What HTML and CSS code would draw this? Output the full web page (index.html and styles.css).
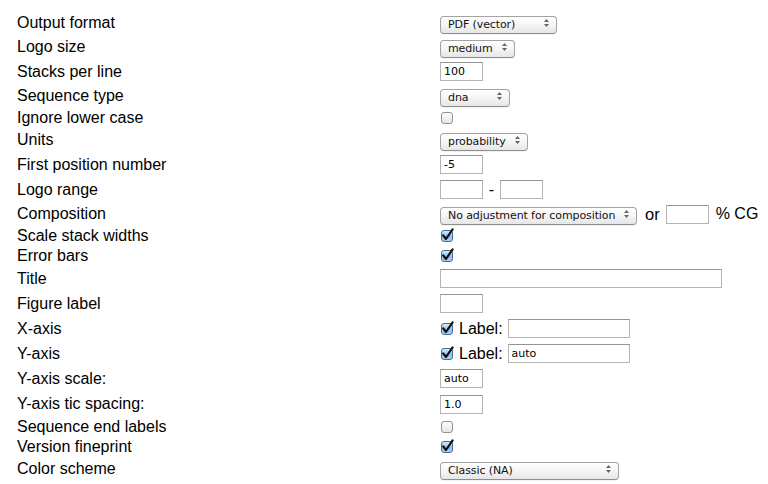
FILE: index.html
```html
<!DOCTYPE html>
<html>
<head>
<meta charset="utf-8">
<title>Logo options</title>
<link rel="stylesheet" href="styles.css">
</head>
<body>
<form class="form">
  <div class="row h-s"><span class="lbl">Output format</span>
    <span class="ctl"><span class="sel w117"><select><option>PDF (vector)</option></select><svg class="arr" viewBox="0 0 5 8"><path d="M0 3h5L2.5 0z M0 5h5L2.5 8z"/></svg></span></span></div>
  <div class="row h-s"><span class="lbl">Logo size</span>
    <span class="ctl"><span class="sel w75"><select><option>medium</option></select><svg class="arr" viewBox="0 0 5 8"><path d="M0 3h5L2.5 0z M0 5h5L2.5 8z"/></svg></span></span></div>
  <div class="row h-i"><span class="lbl">Stacks per line</span>
    <span class="ctl"><input class="txt w43" type="text" value="100"></span></div>
  <div class="row h-s"><span class="lbl">Sequence type</span>
    <span class="ctl"><span class="sel w70"><select><option>dna</option></select><svg class="arr" viewBox="0 0 5 8"><path d="M0 3h5L2.5 0z M0 5h5L2.5 8z"/></svg></span></span></div>
  <div class="row h-c"><span class="lbl">Ignore lower case</span>
    <span class="ctl"><span class="cb"><input type="checkbox"></span></span></div>
  <div class="row h-s"><span class="lbl">Units</span>
    <span class="ctl"><span class="sel w88"><select><option>probability</option></select><svg class="arr" viewBox="0 0 5 8"><path d="M0 3h5L2.5 0z M0 5h5L2.5 8z"/></svg></span></span></div>
  <div class="row h-i"><span class="lbl">First position number</span>
    <span class="ctl"><input class="txt w43" type="text" value="-5"></span></div>
  <div class="row h-i"><span class="lbl">Logo range</span>
    <span class="ctl"><input class="txt w43" type="text" value=""><span class="dash">-</span><input class="txt w43" type="text" value=""></span></div>
  <div class="row h-s"><span class="lbl">Composition</span>
    <span class="ctl"><span class="sel w197"><select><option>No adjustment for composition</option></select><svg class="arr" viewBox="0 0 5 8"><path d="M0 3h5L2.5 0z M0 5h5L2.5 8z"/></svg></span><span class="or">or</span><input class="txt w43" type="text" value=""><span class="pct">% CG</span></span></div>
  <div class="row h-c"><span class="lbl">Scale stack widths</span>
    <span class="ctl"><span class="cb"><input type="checkbox" checked><svg class="chk" viewBox="0 0 14 14"><path d="M3.2 7.4 L6 11 L12.6 1.4" /></svg></span></span></div>
  <div class="row h-c"><span class="lbl">Error bars</span>
    <span class="ctl"><span class="cb"><input type="checkbox" checked><svg class="chk" viewBox="0 0 14 14"><path d="M3.2 7.4 L6 11 L12.6 1.4" /></svg></span></span></div>
  <div class="row h-i"><span class="lbl">Title</span>
    <span class="ctl"><input class="txt w282" type="text" value=""></span></div>
  <div class="row h-i"><span class="lbl">Figure label</span>
    <span class="ctl"><input class="txt w43" type="text" value=""></span></div>
  <div class="row h-i"><span class="lbl">X-axis</span>
    <span class="ctl"><span class="cb"><input type="checkbox" checked><svg class="chk" viewBox="0 0 14 14"><path d="M3.2 7.4 L6 11 L12.6 1.4" /></svg></span><span class="lab">Label:</span><input class="txt w122" type="text" value=""></span></div>
  <div class="row h-i"><span class="lbl">Y-axis</span>
    <span class="ctl"><span class="cb"><input type="checkbox" checked><svg class="chk" viewBox="0 0 14 14"><path d="M3.2 7.4 L6 11 L12.6 1.4" /></svg></span><span class="lab">Label:</span><input class="txt w122" type="text" value="auto"></span></div>
  <div class="row h-i"><span class="lbl">Y-axis scale:</span>
    <span class="ctl"><input class="txt w43" type="text" value="auto"></span></div>
  <div class="row h-i2"><span class="lbl">Y-axis tic spacing:</span>
    <span class="ctl"><input class="txt w43" type="text" value="1.0"></span></div>
  <div class="row h-c"><span class="lbl">Sequence end labels</span>
    <span class="ctl"><span class="cb"><input type="checkbox"></span></span></div>
  <div class="row h-c"><span class="lbl">Version fineprint</span>
    <span class="ctl"><span class="cb"><input type="checkbox" checked><svg class="chk" viewBox="0 0 14 14"><path d="M3.2 7.4 L6 11 L12.6 1.4" /></svg></span></span></div>
  <div class="row h-s"><span class="lbl">Color scheme</span>
    <span class="ctl"><span class="sel w179"><select><option>Classic (NA)</option></select><svg class="arr" viewBox="0 0 5 8"><path d="M0 3h5L2.5 0z M0 5h5L2.5 8z"/></svg></span></span></div>
</form>
</body>
</html>
```
FILE: styles.css
```css
html, body {
  margin: 0;
  padding: 0;
  background: #fff;
}
body {
  font-family: "Liberation Sans", Arial, Helvetica, sans-serif;
  font-size: 16px;
  color: #000;
}
.form {
  margin: 0;
  padding: 11px 0 0 17px;
}
.row {
  display: grid;
  grid-template-columns: 423px auto;
  align-items: center;
}
.h-s { height: 24px; }
.h-i { height: 25px; }
.h-i2 { height: 26px; }
.h-c { height: 20px; }
.lbl {
  line-height: 18px;
  white-space: nowrap;
}
.ctl {
  display: flex;
  align-items: center;
  height: 100%;
}

/* select */
.sel {
  position: relative;
  display: inline-block;
  height: 18px;
}
.sel select {
  -webkit-appearance: none;
  appearance: none;
  box-sizing: border-box;
  width: 100%;
  height: 18px;
  margin: 0;
  padding: 0 0 0 7px;
  border: 1px solid #a3a3a3;
  border-bottom-color: #8f8f8f;
  border-radius: 4px;
  background: linear-gradient(#ffffff, #f5f5f5 50%, #e6e6e6);
  font: 11px "DejaVu Sans", Verdana, sans-serif;
  letter-spacing: -0.1px;
  color: #111;
  box-shadow: 0 1px 0 rgba(0,0,0,0.05);
}
.sel .arr {
  position: absolute;
  right: 8px;
  top: 5px;
  width: 5px;
  height: 8px;
  fill: #666;
  pointer-events: none;
}
.w70 { width: 70px; }
.w75 { width: 75px; }
.w88 { width: 88px; }
.w117 { width: 117px; }
.w179 { width: 179px; }
.w197 { width: 197px; }

/* text inputs */
.txt {
  box-sizing: border-box;
  height: 19px;
  margin: 0;
  padding: 0 3px;
  border: 1px solid #b4b4b4;
  border-top-color: #949494;
  background: #fff;
  font: 11px "DejaVu Sans", Verdana, sans-serif;
  color: #000;
  border-radius: 0;
}
.w43 { width: 43px; }
.w122 { width: 122px; }
.w282 { width: 282px; }

.dash {
  width: 17px;
  text-align: center;
}
.or {
  margin: 0 6px 0 8px;
  font-size: 16.5px;
}
.pct {
  margin-left: 7px;
  font-size: 16px;
}
.lab {
  margin: 0 5px 0 6px;
}

/* checkbox */
.cb {
  position: relative;
  display: inline-block;
  width: 12px;
  height: 12px;
  margin-left: 1px;
}
.cb input {
  -webkit-appearance: none;
  appearance: none;
  box-sizing: border-box;
  display: block;
  width: 12px;
  height: 12px;
  margin: 0;
  border: 1px solid #929292;
  border-radius: 3px;
  background: linear-gradient(#fdfdfd, #e6e6e6);
}
.cb input:checked {
  border-color: #4a6a93;
  background: linear-gradient(#d7ebfd, #8fc0ee 55%, #a9d2f6);
}
.cb .chk {
  position: absolute;
  left: -1px;
  top: -2px;
  width: 14px;
  height: 14px;
  fill: none;
  stroke: #111;
  stroke-width: 2.2;
  stroke-linecap: round;
  stroke-linejoin: round;
  pointer-events: none;
}
```
